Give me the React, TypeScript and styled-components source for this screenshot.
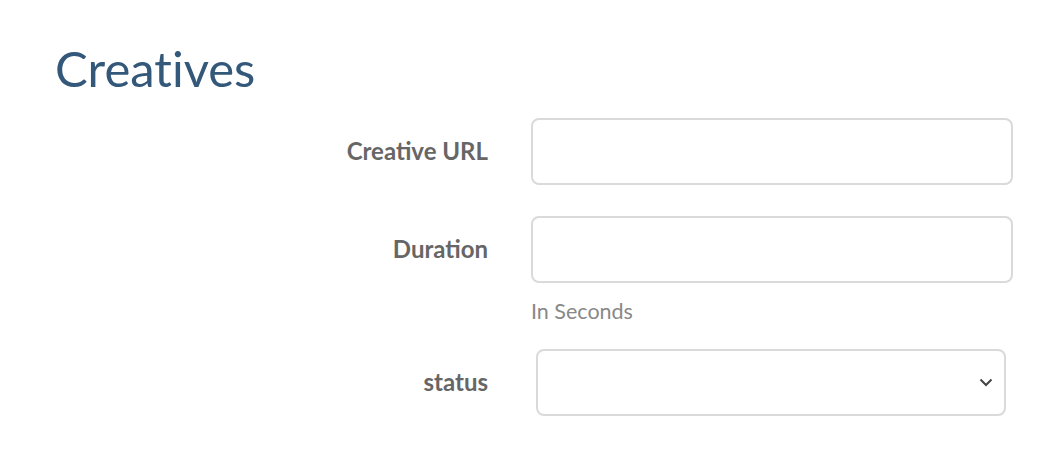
import React from "react";
import styled, { createGlobalStyle } from "styled-components";

const Global = createGlobalStyle`
  html, body { margin: 0; padding: 0; background: #fff; }
  body { font-family: Lato, "Open Sans", sans-serif; }
`;

const Page = styled.div`
  padding: 36px 0 0 55px;
`;

const Title = styled.h1`
  margin: 0 0 18px 0;
  font-size: 49px;
  font-weight: 400;
  color: #34587a;
  line-height: 64px;
  font-variant-ligatures: none;
`;

const Form = styled.div`
  display: grid;
  grid-template-columns: 433px 482px;
  column-gap: 43px;
  align-items: start;
`;

const Label = styled.label`
  justify-self: end;
  font-size: 24px;
  font-weight: 700;
  color: #666666;
  line-height: 66px;
`;

const Field = styled.div<{ $gap: number }>`
  margin-bottom: ${(p) => p.$gap}px;
`;

const Input = styled.input`
  box-sizing: border-box;
  display: block;
  width: 482px;
  height: 67px;
  border: 2px solid #dadada;
  border-radius: 8px;
  background: #fff;
  outline: none;
  font-family: inherit;
  font-size: 20px;
  padding: 0 14px;
`;

const Help = styled.div`
  margin-top: 15px;
  font-size: 21.5px;
  line-height: 26px;
  color: #888;
`;

const SelectWrap = styled.div`
  position: relative;
  margin-left: 5px;
  width: 470px;
`;

const Select = styled.select`
  box-sizing: border-box;
  display: block;
  width: 470px;
  height: 67px;
  border: 2px solid #dadada;
  border-radius: 8px;
  background: #fff;
  appearance: none;
  outline: none;
  font-family: inherit;
  font-size: 20px;
`;

const Chevron = styled.svg`
  position: absolute;
  right: 13px;
  top: 29px;
  pointer-events: none;
`;

export default function App() {
  return (
    <>
      <Global />
      <Page>
        <Title>Creatives</Title>
        <Form>
          <Label>Creative URL</Label>
          <Field $gap={31}>
            <Input />
          </Field>
          <Label>Duration</Label>
          <Field $gap={25}>
            <Input />
            <Help>In Seconds</Help>
          </Field>
          <Label>status</Label>
          <Field $gap={0}>
            <SelectWrap>
              <Select defaultValue="">
                <option value=""></option>
              </Select>
              <Chevron width="14" height="9" viewBox="0 0 14 9">
                <path d="M1.5 1.5 L7 7 L12.5 1.5" fill="none" stroke="#444" strokeWidth="2" />
              </Chevron>
            </SelectWrap>
          </Field>
        </Form>
      </Page>
    </>
  );
}
